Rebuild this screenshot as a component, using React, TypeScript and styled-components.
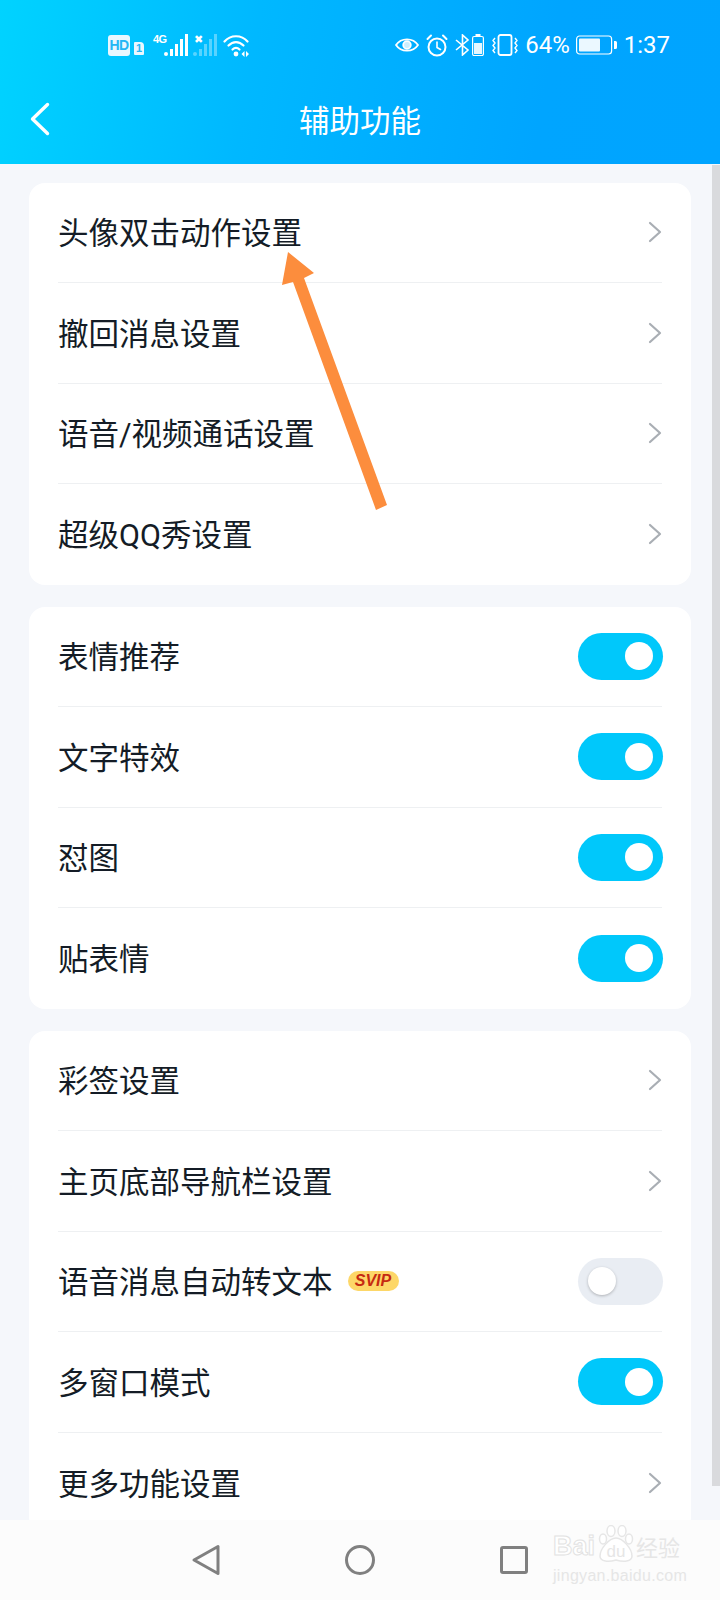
import React from 'react';

import styled, {createGlobalStyle} from 'styled-components';

const GlobalStyle = createGlobalStyle`
    html,
    body {
        margin: 0;
        padding: 0;
        background: #f5f7fb;
    }
`;

type RowData = {
    label: string;
    toggle?: boolean;
    svip?: boolean;
};

const GROUPS: RowData[][] = [
    [
        {label: '头像双击动作设置'},
        {label: '撤回消息设置'},
        {label: '语音/视频通话设置'},
        {label: '超级QQ秀设置'},
    ],
    [
        {label: '表情推荐', toggle: true},
        {label: '文字特效', toggle: true},
        {label: '怼图', toggle: true},
        {label: '贴表情', toggle: true},
    ],
    [
        {label: '彩签设置'},
        {label: '主页底部导航栏设置'},
        {label: '语音消息自动转文本', toggle: false, svip: true},
        {label: '多窗口模式', toggle: true},
        {label: '更多功能设置'},
    ],
];

function SignalBars({faded}: {faded?: boolean}) {
    return (
        <svg width="24" height="22" viewBox="0 0 24 22" fill="#fff" opacity={faded ? 0.35 : 1}>
            <circle cx="2" cy="20" r="2" />
            <rect x="6" y="15" width="3" height="7" />
            <rect x="11" y="10" width="3" height="12" />
            <rect x="16" y="5" width="3" height="17" />
            <rect x="21" y="0" width="3" height="22" />
        </svg>
    );
}

function StatusLeft() {
    return (
        <StatusGroup>
            <HdBadge>HD</HdBadge>
            <SimBadge>1</SimBadge>
            <NetworkMark>
                <NetworkLabel $width={12}>4G</NetworkLabel>
                <SignalBars />
            </NetworkMark>
            <NetworkMark>
                <NetworkLabel $width={0}>✖</NetworkLabel>
                <SignalBars faded />
            </NetworkMark>
            <svg width="28" height="23" viewBox="0 0 28 23" fill="none" stroke="#fff" strokeWidth="2.200" strokeLinecap="round">
                <path d="M1.500 7.500C7.500 .5 18.500 .5 24.500 7.500" />
                <path d="M5.500 11.500c4.500-4.600 10.500-4.600 15 0" />
                <path d="M9.500 15.500c2.200-2.200 4.800-2.200 7 0" />
                <circle cx="13" cy="20" r="2.400" fill="#fff" stroke="none" />
                <path d="M21.500 17v6l-3-3ZM23 17v6l3-3Z" fill="#fff" stroke="none" />
            </svg>
        </StatusGroup>
    );
}

function StatusRight() {
    return (
        <StatusGroup>
            <svg width="24" height="18" viewBox="0 0 24 18" fill="none" stroke="#fff" strokeWidth="1.800">
                <path d="M1 9C6 1.500 18 1.500 23 9 18 16.500 6 16.500 1 9Z" />
                <circle cx="12" cy="9" r="3.800" fill="#fff" fillOpacity="0.8" />
            </svg>
            <GapIcon $gap={7}>
                <svg width="22" height="23" viewBox="0 0 22 23" fill="none" stroke="#fff" strokeWidth="2" strokeLinecap="round">
                    <circle cx="11" cy="13" r="8.500" />
                    <path d="M11 8v5.500l3.500 2" strokeWidth="1.600" />
                    <path d="M1.500 5 5 1.500M20.500 5 17 1.500" />
                </svg>
            </GapIcon>
            <GapIcon $gap={7}>
                <svg width="15" height="22" viewBox="0 0 15 22" fill="none" stroke="#fff" strokeWidth="1.600">
                    <path d="M1 6l12 10-5.500 5V1L13 6 1 16" />
                </svg>
            </GapIcon>
            <GapIcon $gap={2}>
                <svg width="12" height="22" viewBox="0 0 12 22" fill="none" stroke="#fff" strokeWidth="1.200">
                    <rect x=".6" y="2.500" width="10.800" height="19" rx="1.500" />
                    <rect x="3.500" y="0" width="5" height="2.500" fill="#fff" stroke="none" />
                    <rect x="2" y="9" width="8" height="11" fill="#fff" fillOpacity="0.9" stroke="none" />
                </svg>
            </GapIcon>
            <GapIcon $gap={8}>
                <svg width="26" height="22" viewBox="0 0 26 22" fill="none" stroke="#fff" strokeWidth="1.800">
                    <rect x="6.500" y="1" width="13" height="20" rx="2" />
                    <path d="M3 4 1 6.500 3 9 1 11.500 3 14 1 16.500 3 19M23 4l2 2.500L23 9l2 2.500L23 14l2 2.500L23 19" strokeWidth="1.400" />
                </svg>
            </GapIcon>
            <StatusText $gap={7}>64%</StatusText>
            <GapIcon $gap={6}>
                <svg width="41" height="20" viewBox="0 0 41 20" fill="none" stroke="#fff" strokeWidth="1.200">
                    <rect x=".6" y="1" width="35" height="18" rx="3" />
                    <rect x="3" y="3.500" width="21" height="13" rx="1" fill="#fff" fillOpacity="0.92" stroke="none" />
                    <path d="M38 6h1.500a1.500 1.500 0 0 1 1.500 1.500v5a1.500 1.500 0 0 1-1.500 1.500H38Z" fill="#fff" stroke="none" />
                </svg>
            </GapIcon>
            <StatusText $gap={7}>1:37</StatusText>
        </StatusGroup>
    );
}

function Row({label, toggle, svip}: RowData) {
    return (
        <RowItem>
            <RowLabel>{label}</RowLabel>
            {svip && <SvipBadge>SVIP</SvipBadge>}
            <RowSpacer />
            {toggle === undefined ? (
                <svg width="14" height="22" viewBox="0 0 14 22" fill="none" stroke="#a9aeb4" strokeWidth="2.200" strokeLinecap="round" strokeLinejoin="round">
                    <path d="M2 2l10 9-10 9" />
                </svg>
            ) : (
                <Switch $on={toggle}>
                    <Knob $on={toggle} />
                </Switch>
            )}
        </RowItem>
    );
}

export default function App() {
    return (
        <Page>
            <GlobalStyle />
            <Header>
                <StatusBar>
                    <StatusLeft />
                    <StatusRight />
                </StatusBar>
                <TitleBar>
                    <svg width="20" height="34" viewBox="0 0 20 34" fill="none" stroke="#fff" strokeWidth="3.400" strokeLinecap="round" strokeLinejoin="round">
                        <path d="M17.500 2.500 2.500 17l15 14.500" />
                    </svg>
                    <Title>辅助功能</Title>
                </TitleBar>
            </Header>
            <Content>
                {GROUPS.map((rows, groupIndex) => (
                    <Card key={`group-${groupIndex}`}>
                        {rows.map((row) => (
                            <Row key={row.label} {...row} />
                        ))}
                    </Card>
                ))}
            </Content>
            <NavBar>
                <svg width="30" height="32" viewBox="0 0 30 32" fill="none" stroke="#808080" strokeWidth="3" strokeLinejoin="round">
                    <path d="M27 2.500v27L3 16Z" />
                </svg>
                <svg width="30" height="32" viewBox="0 0 30 32" fill="none" stroke="#808080" strokeWidth="3">
                    <circle cx="15" cy="16" r="13.500" />
                </svg>
                <svg width="30" height="32" viewBox="0 0 30 32" fill="none" stroke="#808080" strokeWidth="3" strokeLinejoin="round">
                    <rect x="2.500" y="3.500" width="25" height="25" rx="1.500" />
                </svg>
            </NavBar>
            <Scrollbar />
            <Arrow width="110" height="262" viewBox="0 0 110 262" fill="#fc8d3d">
                <path d="M8 0 34 21 24 26 107 253 96 258 13 30 2 33Z" />
            </Arrow>
            <Watermark>
                <WatermarkLogo>
                    <WatermarkLatin>Bai</WatermarkLatin>
                    <svg width="36" height="37" viewBox="0 0 36 37" fill="#fff" stroke="#e6e6e6" strokeWidth="1.500">
                        <ellipse cx="13" cy="6" rx="4" ry="5.500" />
                        <ellipse cx="24" cy="6" rx="4" ry="5.500" />
                        <ellipse cx="5" cy="14" rx="3.500" ry="5" />
                        <ellipse cx="31" cy="14" rx="3.500" ry="5" />
                        <path d="M18 13c7 0 16 11 16 18 0 6-9 6-16 4-7 2-16 2-16-4 0-7 9-18 16-18Z" />
                        <text x="18" y="32" textAnchor="middle" fontFamily="Liberation Sans, sans-serif" fontSize="17" fill="#e6e6e6" stroke="none">du</text>
                    </svg>
                    <WatermarkCn>经验</WatermarkCn>
                </WatermarkLogo>
                <WatermarkUrl>jingyan.baidu.com</WatermarkUrl>
            </Watermark>
        </Page>
    );
}

const Page = styled.div`
    position: relative;
    display: flex;
    flex-direction: column;
    width: 720px;
    height: 1600px;
    overflow: hidden;
    background: #f5f7fb;
    font-family: "Noto Sans CJK SC", "Noto Sans", sans-serif;
`;

const Header = styled.header`
    display: flex;
    flex-direction: column;
    flex: none;
    height: 164px;
    background: linear-gradient(100deg, #00d3ff 0%, #00b8ff 35%, #00a5ff 75%, #00a4ff 100%);
    color: #fff;
`;

const StatusBar = styled.div`
    display: flex;
    align-items: center;
    justify-content: space-between;
    height: 22px;
    margin-top: 34px;
    padding: 0 50px 0 108px;
`;

const StatusGroup = styled.div`
    display: flex;
    align-items: center;
`;

const HdBadge = styled.span`
    width: 22px;
    height: 21px;
    border-radius: 3px;
    background: #e9f7ff;
    color: #24b6f5;
    font-family: "Liberation Sans", sans-serif;
    font-size: 14px;
    font-weight: 700;
    letter-spacing: -0.5px;
    line-height: 21px;
    text-align: center;
`;

const SimBadge = styled.span`
    width: 10px;
    height: 13px;
    margin: 7px 9px 0 4px;
    border-radius: 1px 4px 1px 1px;
    background: #e9f7ff;
    color: #24b6f5;
    font-family: "Liberation Sans", sans-serif;
    font-size: 11px;
    font-weight: 700;
    line-height: 13px;
    text-align: center;
`;

const NetworkMark = styled.span`
    display: flex;
    align-items: flex-start;
    margin-right: 6px;
`;

const NetworkLabel = styled.span<{$width: number}>`
    width: ${(props) => props.$width}px;
    margin-right: -1px;
    color: #fff;
    font-family: "Liberation Sans", "DejaVu Sans", sans-serif;
    font-size: 11px;
    font-weight: 700;
    letter-spacing: -0.5px;
    line-height: 10px;
    white-space: nowrap;
`;

const GapIcon = styled.span<{$gap: number}>`
    display: flex;
    margin-left: ${(props) => props.$gap}px;
`;

const StatusText = styled.span<{$gap: number}>`
    margin-left: ${(props) => props.$gap}px;
    color: #fff;
    font-family: Roboto, sans-serif;
    font-size: 24px;
    line-height: 22px;
    white-space: nowrap;
`;

const TitleBar = styled.div`
    display: grid;
    flex: 1;
    grid-template-columns: 1fr auto 1fr;
    align-items: center;
    padding: 17px 30px 0;
`;

const Title = styled.h1`
    margin: 0;
    color: #fff;
    font-size: 30.500px;
    font-weight: 400;
    line-height: 40px;
`;

const Content = styled.main`
    display: flex;
    flex: 1;
    flex-direction: column;
    gap: 22px;
    min-height: 0;
    padding: 18.500px 29px 0;
    overflow: hidden;
`;

const Card = styled.section`
    flex: none;
    padding: 0 29px;
    border-radius: 16px;
    background: #fff;
`;

const RowItem = styled.div`
    display: flex;
    align-items: center;
    height: 100.500px;
    box-sizing: border-box;
    border-bottom: 1px solid #eef0f2;

    &:last-child {
        border-bottom: 0;
    }
`;

const RowLabel = styled.span`
    padding-top: 4px;
    color: #141c26;
    font-family: Roboto, "Noto Sans CJK SC", sans-serif;
    font-size: 30.500px;
    line-height: 40px;
    white-space: nowrap;
`;

const RowSpacer = styled.span`
    flex: 1;
`;

const SvipBadge = styled.span`
    width: 51px;
    height: 20px;
    margin-left: 15px;
    border-radius: 10px;
    background: #fdd768;
    color: #c62a12;
    font-family: "Liberation Sans", sans-serif;
    font-size: 16px;
    font-style: italic;
    font-weight: 700;
    line-height: 20px;
    text-align: center;
`;

const Switch = styled.span<{$on: boolean}>`
    display: flex;
    align-items: center;
    justify-content: ${(props) => (props.$on ? 'flex-end' : 'flex-start')};
    width: 85px;
    height: 47px;
    margin-right: -1px;
    padding: 0 10px;
    box-sizing: border-box;
    border-radius: 24px;
    background: ${(props) => (props.$on ? '#00c8fb' : '#e9edf3')};
`;

const Knob = styled.span<{$on: boolean}>`
    width: 28px;
    height: 28px;
    border-radius: 50%;
    background: #fff;
    box-shadow: ${(props) => (props.$on ? 'none' : '0 1px 3px rgba(0, 0, 0, 0.25)')};
`;

const NavBar = styled.nav`
    display: flex;
    flex: none;
    align-items: center;
    justify-content: center;
    gap: 124px;
    height: 80px;
    box-sizing: border-box;
    background: #fcfcfc;
`;

const Scrollbar = styled.div`
    position: absolute;
    right: 0;
    top: 165px;
    width: 8px;
    height: 1321px;
    background: #d9dadd;
`;

const Arrow = styled.svg`
    position: absolute;
    left: 280px;
    top: 252px;
`;

const Watermark = styled.div`
    position: absolute;
    left: 553px;
    top: 1523px;
    width: 130px;
`;

const WatermarkLogo = styled.div`
    display: flex;
    align-items: flex-end;
    height: 39px;
    white-space: nowrap;
`;

const WatermarkLatin = styled.span`
    width: 45px;
    color: #fff;
    font-family: "Liberation Sans", sans-serif;
    font-size: 27px;
    font-weight: 700;
    line-height: 32px;
    -webkit-text-stroke: 1px #e2e2e2;
`;

const WatermarkCn = styled.span`
    margin-left: 2px;
    color: #e6e6e6;
    font-family: "Noto Sans CJK SC", sans-serif;
    font-size: 22px;
    line-height: 32px;
`;

const WatermarkUrl = styled.div`
    margin-top: 4px;
    color: #e6e6e6;
    font-family: "Liberation Sans", sans-serif;
    font-size: 16px;
    letter-spacing: 0.3px;
    line-height: 20px;
    white-space: nowrap;
`;
